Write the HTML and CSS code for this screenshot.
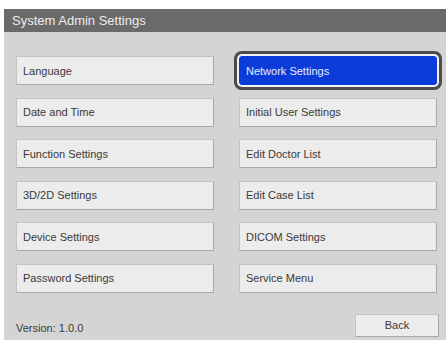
FILE: index.html
```html
<!DOCTYPE html>
<html lang="en">

<head>
    <meta charset="UTF-8" />
    <meta name="viewport" content="width=device-width, initial-scale=1.0" />
    <title>System Admin Settings</title>
    <link rel="stylesheet" href="styles.css">
</head>

<body>
    <div class="panel">
        <div class="titleBar">System Admin Settings</div>
        <div class="panelBody">
            <div class="menuGrid">
                <button class="menuBtn">Language</button>
                <button class="menuBtn selected">Network Settings</button>
                <button class="menuBtn">Date and Time</button>
                <button class="menuBtn">Initial User Settings</button>
                <button class="menuBtn">Function Settings</button>
                <button class="menuBtn">Edit Doctor List</button>
                <button class="menuBtn">3D/2D Settings</button>
                <button class="menuBtn">Edit Case List</button>
                <button class="menuBtn">Device Settings</button>
                <button class="menuBtn">DICOM Settings</button>
                <button class="menuBtn">Password Settings</button>
                <button class="menuBtn">Service Menu</button>
            </div>
            <div class="footer">
                <span class="version">Version: 1.0.0</span>
                <button class="backBtn">Back</button>
            </div>
        </div>
    </div>
</body>

</html>
```

FILE: styles.css
```css
:root {
    --title-bg: #6a6a6a;
    --panel-bg: #d4d4d4;
    --btn-bg: #ececec;
    --btn-border: #a8a8a8;
    --text: #3a3a3a;
    --blue: #0b3bd8;
    --base-font: "Liberation Sans", Arial, sans-serif;
}

html,
body {
    margin: 0;
    padding: 0;
    background: #ffffff;
    font-family: var(--base-font);
}

.panel {
    width: 442px;
    margin: 9px 0 0 4px;
    background: var(--panel-bg);
}

.titleBar {
    height: 23px;
    line-height: 23px;
    padding-left: 8px;
    background: var(--title-bg);
    color: #ededed;
    font-size: 13px;
}

.panelBody {
    padding: 24px 9px 3px 12px;
}

.menuGrid {
    display: grid;
    grid-template-columns: 198px 198px;
    column-gap: 25px;
    row-gap: 12.6px;
}

.menuBtn,
.backBtn {
    height: 29px;
    margin: 0;
    padding: 0 0 0 6px;
    text-align: left;
    font-family: var(--base-font);
    font-size: 11px;
    color: var(--text);
    background: var(--btn-bg);
    border: 1px solid var(--btn-border);
    border-top-color: #c4c4c4;
    border-left-color: #c4c4c4;
    border-radius: 1px;
}

.menuBtn.selected {
    background: var(--blue);
    color: #e8ecff;
    border-color: var(--blue);
    border-radius: 3px;
    box-shadow: 0 0 0 2px #f2f2f2, 0 0 0 5px #4c4c4c;
}

.footer {
    display: flex;
    justify-content: space-between;
    align-items: center;
    margin-top: 21px;
}

.version {
    margin-top: 5px;
    font-size: 11px;
    color: var(--text);
}

.backBtn {
    width: 84px;
    height: 23px;
    padding: 0;
    text-align: center;
    margin-right: -2px;
}
```
